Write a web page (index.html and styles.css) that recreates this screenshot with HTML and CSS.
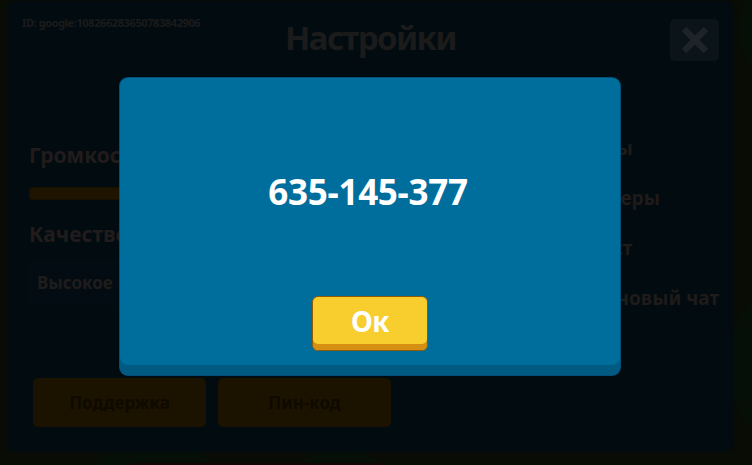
FILE: index.html
```html
<!DOCTYPE html>
<html lang="ru">
<head>
<meta charset="utf-8">
<title>Настройки</title>
<link rel="stylesheet" href="styles.css">
</head>
<body>
<div class="scene">
  <div class="deco deco-a"></div>
  <div class="deco deco-b"></div>
  <div class="deco deco-c"></div>
  <div class="deco deco-d"></div>
  <div class="deco deco-red"></div>

  <section class="panel">
    <header class="panel-head">
      <div class="user-id">ID: google:108266283650783842906</div>
      <h1 class="title">Настройки</h1>
      <div class="close-btn">
        <svg viewBox="0 0 24 24" width="26" height="26"><path d="M4 4L20 20M20 4L4 20" stroke="#1d2327" stroke-width="6" stroke-linecap="square"/></svg>
      </div>
    </header>

    <div class="panel-body">
      <div class="col-left">
        <div class="label">Громкость</div>
        <div class="slider"></div>
        <div class="label label-quality">Качество</div>
        <div class="select">Высокое</div>
      </div>
      <div class="col-right">
        <div class="opt">Игры</div>
        <div class="opt">Камеры</div>
        <div class="opt">Текст</div>
        <div class="opt">Клановый чат</div>
      </div>
    </div>

    <div class="panel-foot">
      <div class="btn-dim">Поддержка</div>
      <div class="btn-dim">Пин-код</div>
    </div>
  </section>

  <div class="modal">
    <div class="pin">635-145-377</div>
    <div class="ok-btn">Ок</div>
  </div>
</div>
</body>
</html>
```

FILE: styles.css
```css
html, body {
  margin: 0;
  padding: 0;
}
body {
  background: #090c05;
  font-family: "Noto Sans", "Open Sans", sans-serif;
  font-weight: 700;
  overflow: hidden;
}
.scene {
  position: relative;
  width: 752px;
  height: 465px;
  overflow: hidden;
}

/* faint background shapes */
.deco {
  position: absolute;
  border-radius: 50%;
  background: #060f07;
}
.deco-a { left: 95px; top: 442px; width: 120px; height: 60px; }
.deco-b { left: 300px; top: 450px; width: 80px; height: 40px; }
.deco-c { left: 738px; top: -10px; width: 50px; height: 80px; }
.deco-d { left: 730px; top: 300px; width: 60px; height: 130px; }
.deco-red {
  left: 130px; top: 463px; width: 255px; height: 6px;
  border-radius: 3px; background: #110605;
}

.panel {
  position: relative;
  margin: 1px 0 0 7px;
  width: 727px;
  height: 451px;
  box-sizing: border-box;
  background: #020b10;
  border-radius: 8px;
  padding: 0 15px 25px 22px;
  display: flex;
  flex-direction: column;
}

.panel-head {
  display: grid;
  grid-template-columns: 1fr auto 1fr;
  align-items: start;
  margin-left: -7px;
}
.user-id {
  margin-top: 16px;
  font-size: 11px;
  line-height: 11px;
  color: #1b1b1b;
  letter-spacing: -0.4px;
}
.title {
  margin: 20px 0 0;
  font-size: 33px;
  line-height: 34px;
  color: #1c1b1b;
  letter-spacing: -1.6px;
  font-weight: 700;
}
.close-btn {
  justify-self: end;
  margin-top: 18px;
  width: 49px;
  height: 42px;
  border-radius: 5px;
  background: #0b1418;
  display: flex;
  align-items: center;
  justify-content: center;
}

.panel-body {
  display: flex;
}
.col-left {
  width: 300px;
  margin-top: 84px;
}
.label {
  font-size: 21px;
  line-height: 21px;
  color: #211c1b;
}
.slider {
  margin-top: 21px;
  height: 13px;
  width: 280px;
  border-radius: 4px;
  background: #1f1400;
  box-shadow: inset 0 0 0 1px #151000;
}
.label-quality {
  margin-top: 24px;
}
.select {
  margin: 15px 0 0 -2px;
  height: 45px;
  width: 180px;
  border-radius: 4px;
  background: #030c12;
  box-sizing: border-box;
  padding-left: 10px;
  display: flex;
  align-items: center;
  font-size: 17px;
  line-height: 17px;
  color: #1f1c1b;
}
.col-right {
  margin: 62px 0 0 253px;
}
.opt {
  font-size: 19px;
  line-height: 50px;
  color: #1f1b1a;
  white-space: nowrap;
}

.panel-foot {
  margin-top: auto;
  margin-left: 4px;
  display: flex;
  gap: 12px;
}
.btn-dim {
  width: 173px;
  height: 49px;
  border-radius: 5px;
  background: #1b1300;
  display: flex;
  align-items: center;
  justify-content: center;
  font-size: 17px;
  color: #0f0900;
}

/* modal overlay */
.modal {
  position: absolute;
  left: 120px;
  top: 78px;
  width: 500px;
  height: 297px;
  box-sizing: border-box;
  border-radius: 8px;
  background: #006e9d;
  box-shadow: inset 0 -10px 0 #005a82, 0 0 0 1px #00507a;
  display: flex;
  flex-direction: column;
  align-items: center;
  padding-top: 96px;
}
.pin {
  font-size: 35px;
  line-height: 35px;
  color: #ffffff;
  letter-spacing: -0.3px;
  margin-right: 4px;
}
.ok-btn {
  margin-top: 87px;
  width: 116px;
  height: 55px;
  box-sizing: border-box;
  border: 1px solid #8e5a06;
  border-radius: 6px;
  background: #f7ce2e;
  box-shadow: inset 0 -6px 0 #d58f12;
  padding-bottom: 6px;
  display: flex;
  align-items: center;
  justify-content: center;
  font-size: 28px;
  line-height: 28px;
  color: #ffffff;
  letter-spacing: -0.5px;
}
```
